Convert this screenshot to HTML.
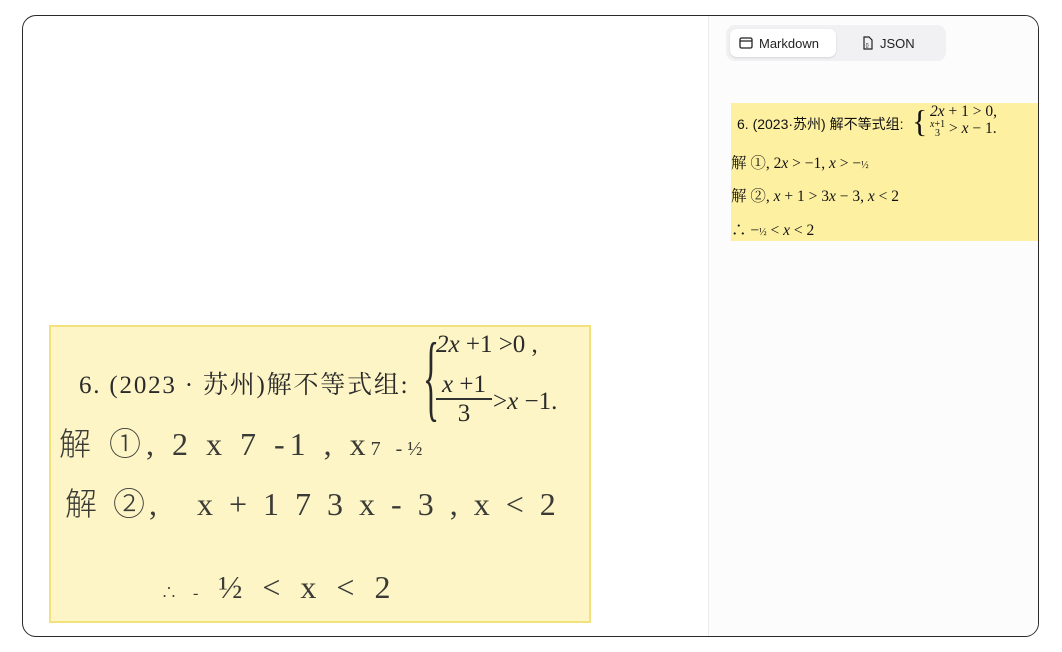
<!DOCTYPE html>
<html><head><meta charset="utf-8"><style>
*{margin:0;padding:0;box-sizing:border-box}
body{width:1062px;height:652px;background:#fff;position:relative;overflow:hidden;font-family:"Liberation Sans","Noto Sans CJK SC",sans-serif}
.card{position:absolute;left:22px;top:15px;width:1017px;height:622px;border:1px solid #2a2a2a;border-radius:14px;overflow:hidden;background:#fff}
.div{position:absolute;left:685px;top:0;width:1px;height:100%;background:#ececec}
.right{position:absolute;left:686px;top:0;right:0;bottom:0;background:#fcfcfd}
.img{position:absolute;left:26px;top:309px;width:542px;height:298px;background:#fdf5c6;border:2px solid #f3e27c;overflow:hidden}
.pr{position:absolute;font-family:"Liberation Serif","Noto Serif CJK SC",serif;color:#2a2a2a;font-size:25px;white-space:nowrap}
.hw{position:absolute;font-family:"Liberation Serif","Noto Sans CJK SC",serif;color:#3a3a36;font-size:32px;white-space:nowrap;font-weight:300}
.tabs{position:absolute;left:703px;top:9px;width:220px;height:36px;background:#f1f1f3;border-radius:9px}
.tab{position:absolute;top:4px;height:28px;font-size:13px;color:#222;display:flex;align-items:center;gap:6px}
.md{left:4px;width:106px;background:#fff;border-radius:7px;box-shadow:0 1px 2px rgba(0,0,0,.12);padding-left:9px}
.js{left:136px}
.yb{position:absolute;left:708px;top:87px;width:310px;height:138px;background:#fdf0a1}
.m{position:absolute;font-family:"Liberation Serif","Noto Serif CJK SC",serif;font-size:15.5px;color:#111;white-space:nowrap}
</style></head><body>
<div class="card">
<div class="right"></div>
<div class="div"></div>
<div class="img">
 <div class="pr" style="left:28px;top:38px;letter-spacing:1.8px">6. (2023 · 苏州)解不等式组:</div>
 <div class="pr" style="left:372px;top:2px;font-size:96px;line-height:96px;font-weight:100;transform:scaleX(.35);transform-origin:left">{</div>
 <div class="pr" style="left:385px;top:4px"><i>2x</i> +1 &gt;0 ,</div>
 <div class="pr" style="left:385px;top:44px;text-align:center;width:56px;line-height:27px"><i>x</i> +1<div style="border-top:2px solid #333"></div>3</div>
 <div class="pr" style="left:442px;top:61px">&gt;<i>x</i> −1.</div>
 <div class="hw" style="left:8px;top:92px;letter-spacing:5px">解 ①, 2 x 7 -1 , x<span style="font-size:20px">7 -½</span></div>
 <div class="hw" style="left:14px;top:152px;letter-spacing:4px">解 ②,&nbsp;&nbsp; x + 1 7 3 x - 3 , x &lt; 2</div>
 <div class="hw" style="left:110px;top:242px;letter-spacing:6px"><span style="font-size:16px">∴ -</span> ½ &lt; x &lt; 2</div>
</div>
<div class="tabs">
 <div class="tab md"><svg width="14" height="12" viewBox="0 0 14 12"><rect x="1" y="1" width="12" height="10" rx="1.5" fill="none" stroke="#222" stroke-width="1.3"/><line x1="1" y1="4" x2="13" y2="4" stroke="#222" stroke-width="1.3"/></svg>Markdown</div>
 <div class="tab js"><svg width="12" height="14" viewBox="0 0 12 14"><path d="M2 1h5l3 3v9H2z" fill="none" stroke="#222" stroke-width="1.2"/><text x="3.5" y="11" font-size="5" fill="#222">{}</text></svg>JSON</div>
</div>
<div class="yb">
 <div class="m" style="left:6px;top:11px;font-family:'Liberation Sans','Noto Sans CJK SC',sans-serif;font-size:14px">6. (2023·苏州) 解不等式组:</div>
 <div class="m" style="left:181px;top:0px;font-size:32px;font-weight:100">{</div>
 <div class="m" style="left:199px;top:0px"><i>2x</i> + 1 &gt; 0,</div>
 <div class="m" style="left:199px;top:17px"><span style="font-size:10px;display:inline-block;text-align:center;line-height:9px;vertical-align:middle"><i>x</i>+1<br>3</span> &gt; <i>x</i> − 1.</div>
 <div class="m" style="left:0;top:48px">解 ①, 2<i>x</i> &gt; −1, <i>x</i> &gt; −<span style="font-size:10px">½</span></div>
 <div class="m" style="left:0;top:81px">解 ②, <i>x</i> + 1 &gt; 3<i>x</i> − 3, <i>x</i> &lt; 2</div>
 <div class="m" style="left:0;top:115px">∴ −<span style="font-size:10px">½</span> &lt; <i>x</i> &lt; 2</div>
</div>
</div>
</body></html>
